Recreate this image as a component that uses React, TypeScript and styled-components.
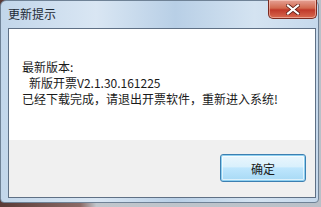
import React from "react";
import styled, { createGlobalStyle } from "styled-components";

const GlobalStyle = createGlobalStyle`
  html, body {
    margin: 0;
    padding: 0;
  }
  body {
    background: #c3c8ce;
    font-family: "Noto Sans CJK SC", "Noto Sans", sans-serif;
  }
`;

const Screen = styled.div`
  width: 321px;
  height: 207px;
  overflow: hidden;
  background: linear-gradient(90deg, #5a3a36 0, #8a6a66 25%, #c0c6cc 30%, #b9c0c8 100%);
`;

const Window = styled.div`
  box-sizing: border-box;
  width: 319px;
  height: 203px;
  border: 1px solid #6f8296;
  border-radius: 6px 6px 4px 4px;
  background: linear-gradient(90deg, #c2d6ea 0%, #d9e6f3 30%, #b8cfe6 55%, #d4e3f1 80%, #c6d9ec 100%);
  display: flex;
  flex-direction: column;
`;

const TitleBar = styled.div`
  height: 27px;
  display: flex;
  justify-content: space-between;
  align-items: flex-start;
  padding-left: 7px;
`;

const Title = styled.span`
  font-size: 12px;
  line-height: 14px;
  margin-top: 6px;
  color: #1e2a36;
`;

const CloseButton = styled.div`
  width: 47px;
  height: 18px;
  margin-right: 1px;
  margin-top: -1px;
  border: 1px solid #7a2a20;
  border-top: none;
  border-radius: 0 0 5px 5px;
  background: linear-gradient(180deg, #e5a195 0%, #d2694f 45%, #c0392a 55%, #d86a50 100%);
  box-shadow: inset 0 0 0 1px rgba(255, 220, 210, 0.5);
  display: flex;
  align-items: center;
  justify-content: center;
`;

const Client = styled.div`
  margin: 0 2px 0 7px;
  height: 168px;
  border: 1px solid #5f7085;
  display: flex;
  flex-direction: column;
`;

const Content = styled.div`
  flex: 1;
  background: #ffffff;
  padding: 30px 0 0 13px;
  font-size: 12px;
  line-height: 16px;
  color: #1a1a1a;
`;

const Line = styled.div<{ indent?: number }>`
  padding-left: ${p => p.indent ?? 0}px;
  white-space: nowrap;
`;

const Footer = styled.div`
  height: 57px;
  background: #f0f0f0;
  display: flex;
  justify-content: flex-end;
  align-items: flex-start;
  padding-right: 9px;
`;

const OkButton = styled.button`
  margin-top: 14px;
  width: 86px;
  height: 28px;
  border: 1px solid #3c7fb1;
  border-radius: 3px;
  background: linear-gradient(180deg, #eaf6fd 0%, #d9f0fc 45%, #bee6fd 50%, #a7d9f5 100%);
  box-shadow: inset 0 0 0 1px #8fd0f0, inset 0 0 0 2px rgba(255, 255, 255, 0.6);
  font-family: "Noto Sans CJK SC", sans-serif;
  font-size: 12px;
  color: #1a1a1a;
  padding: 0;
`;

export default function App() {
  return (
    <>
      <GlobalStyle />
      <Screen>
        <Window>
          <TitleBar>
            <Title>更新提示</Title>
            <CloseButton>
              <svg width="14" height="11" viewBox="0 0 14 11">
                <path
                  d="M2 1.5 L12 9.5 M12 1.5 L2 9.5"
                  stroke="#5a1a12"
                  strokeWidth="3.6"
                  strokeLinecap="square"
                />
                <path
                  d="M2 1.5 L12 9.5 M12 1.5 L2 9.5"
                  stroke="#ffffff"
                  strokeWidth="2.2"
                  strokeLinecap="square"
                />
              </svg>
            </CloseButton>
          </TitleBar>
          <Client>
            <Content>
              <Line>最新版本:</Line>
              <Line indent={7}>新版开票V2.1.30.161225</Line>
              <Line>已经下载完成，请退出开票软件，重新进入系统!</Line>
            </Content>
            <Footer>
              <OkButton>确定</OkButton>
            </Footer>
          </Client>
        </Window>
      </Screen>
    </>
  );
}
